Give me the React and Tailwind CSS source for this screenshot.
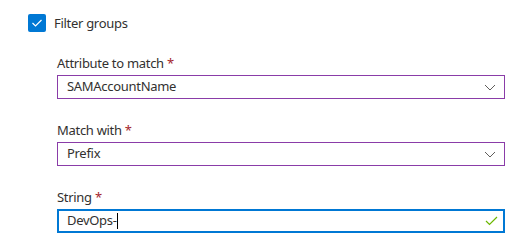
import React from "react";

function Label({ children }) {
  return (
    <div className="h-5 leading-5 text-[13px] tracking-[-0.3px] text-[#323130]">
      {children} <span className="text-[#a4262c]">*</span>
    </div>
  );
}

function Chevron() {
  return (
    <svg width="12" height="7" viewBox="0 0 12 7" className="shrink-0">
      <path d="M1 1 L6 6 L11 1" fill="none" stroke="#605e5c" strokeWidth="1" />
    </svg>
  );
}

export default function App() {
  return (
    <div className="w-[521px] h-[244px] bg-white font-['Noto_Sans',sans-serif]">
      <div className="pt-[14px] pl-[28px] flex items-center gap-[8px] h-[32px]">
        <div className="w-[18px] h-[18px] rounded-[2px] bg-[#0078d4] flex items-center justify-center">
          <svg width="12" height="10" viewBox="0 0 12 10">
            <path d="M1.5 5 L4.5 8 L10.5 2" fill="none" stroke="white" strokeWidth="1.2" />
          </svg>
        </div>
        <span className="text-[13px] tracking-[-0.3px] text-[#323130] leading-5">Filter groups</span>
      </div>
      <div className="pl-[57px] w-[505px] pt-[21px] flex flex-col gap-[21px]">
        <div className="flex flex-col gap-[2px]">
          <Label>Attribute to match</Label>
          <div className="h-[24px] border border-[#8a3ca8] flex items-center pl-[9px] pr-[8px]">
            <span className="flex-1 text-[13px] tracking-[-0.3px] text-[#323130]">SAMAccountName</span>
            <Chevron />
          </div>
        </div>
        <div className="flex flex-col gap-[2px]">
          <Label>Match with</Label>
          <div className="h-[24px] border border-[#8a3ca8] flex items-center pl-[9px] pr-[8px]">
            <span className="flex-1 text-[13px] tracking-[-0.3px] text-[#323130]">Prefix</span>
            <Chevron />
          </div>
        </div>
        <div className="flex flex-col gap-[2px]">
          <Label>String</Label>
          <div className="h-[24px] border-2 border-[#0078d4] flex items-center pl-[8px] pr-[5px]">
            <span className="flex-1 text-[13px] tracking-[-0.3px] text-[#323130] flex items-center">
              DevOps-<span className="inline-block w-px h-[16px] bg-black" />
            </span>
            <svg width="13" height="10" viewBox="0 0 13 10" className="shrink-0">
              <path d="M1 5 L4.5 8.5 L12 1" fill="none" stroke="#6bb700" strokeWidth="1.2" />
            </svg>
          </div>
        </div>
      </div>
    </div>
  );
}
